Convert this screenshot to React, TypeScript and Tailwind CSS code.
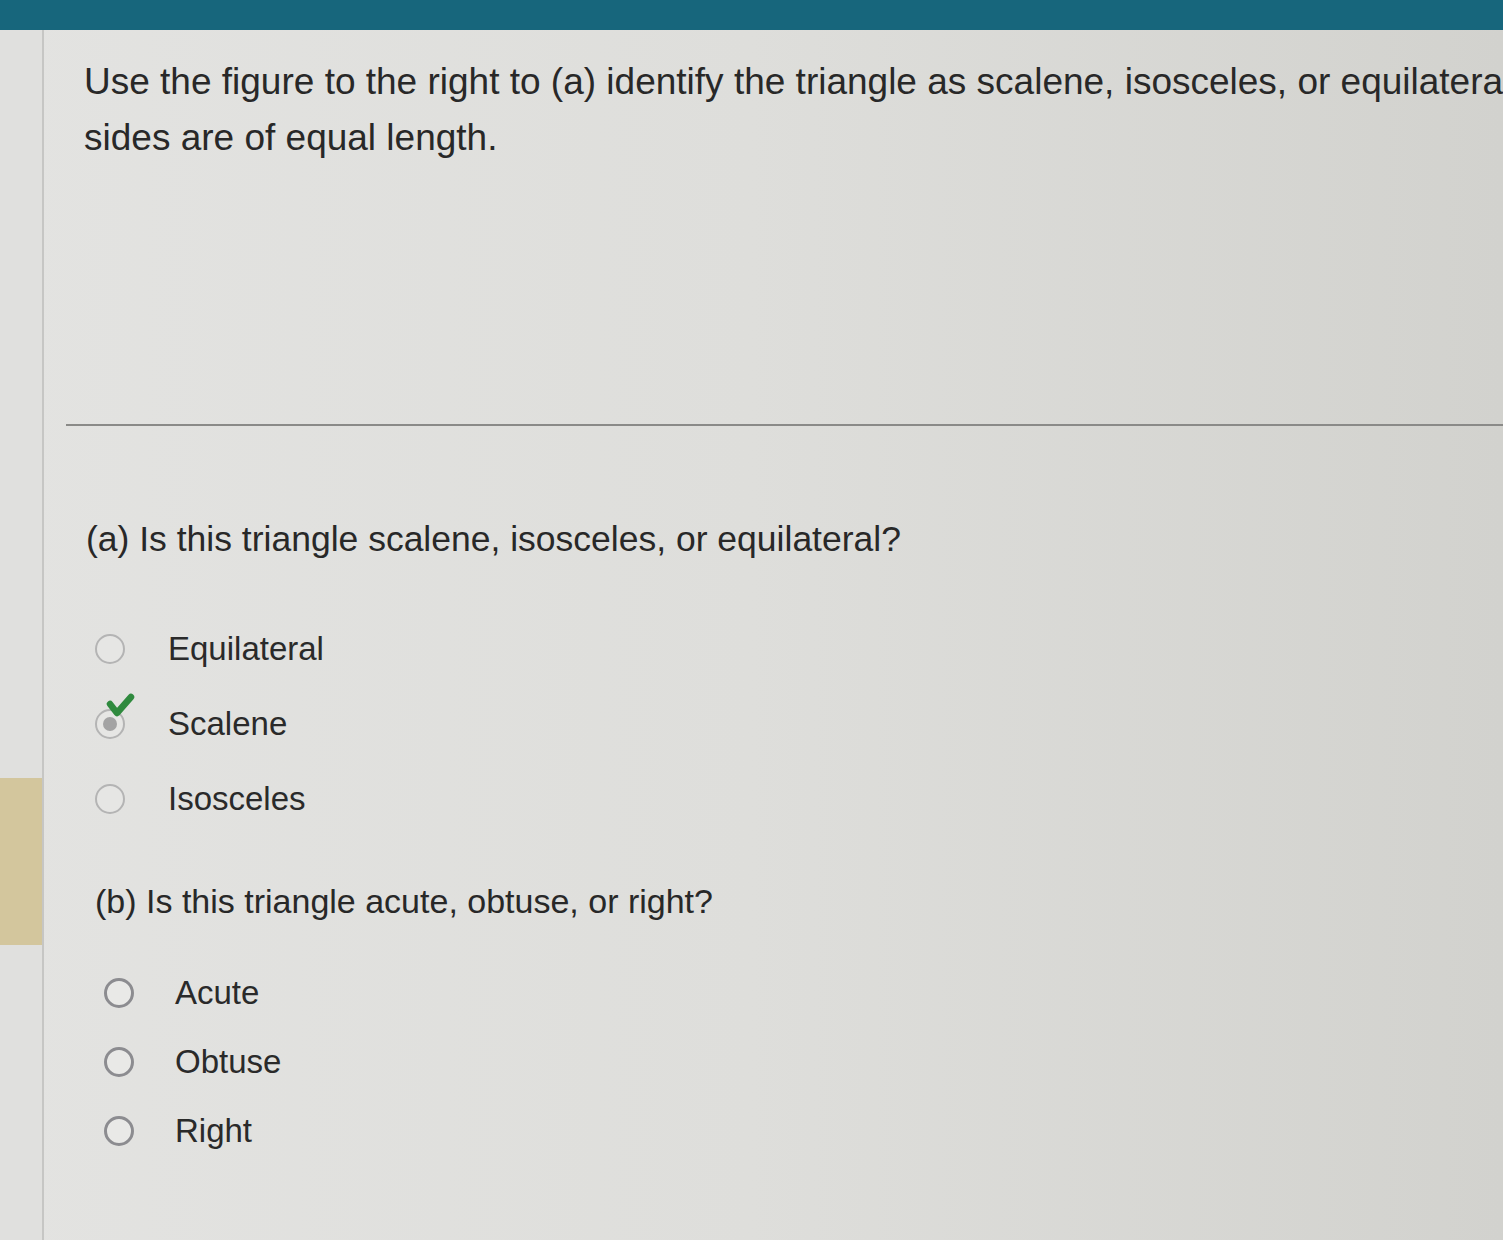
import React from 'react';

type Choice = { label: string; selected?: boolean };

const PART_A: Choice[] = [
  { label: 'Equilateral' },
  { label: 'Scalene', selected: true },
  { label: 'Isosceles' },
];

const PART_B: Choice[] = [{ label: 'Acute' }, { label: 'Obtuse' }, { label: 'Right' }];

function Radio({ selected, dark }: { selected?: boolean; dark?: boolean }) {
  return (
    <span className="relative flex h-[30px] w-[30px] shrink-0 items-center justify-center">
      <span
        className={
          dark
            ? 'h-[30px] w-[30px] rounded-full border-[3px] border-[#8c8c90] bg-[#e9e9e7]'
            : 'h-[30px] w-[30px] rounded-full border-[2.5px] border-[#b4b4b4] bg-[#e6e6e4]'
        }
      />
      {selected && (
        <>
          <span className="absolute h-[14px] w-[14px] rounded-full bg-[#a3a3a3]" />
          <svg
            className="absolute -right-[10px] -top-[16px] h-[26px] w-[30px]"
            viewBox="0 0 30 26"
            fill="none"
          >
            <path
              d="M5 11 L12 20 L26 4"
              stroke="#2f8a3e"
              strokeWidth="6.5"
              strokeLinecap="round"
              strokeLinejoin="round"
            />
          </svg>
        </>
      )}
    </span>
  );
}

function ChoiceList({ items, dark, rowClass, gapClass }: { items: Choice[]; dark?: boolean; rowClass: string; gapClass: string }) {
  return (
    <div className="flex flex-col">
      {items.map((c) => (
        <label key={c.label} className={`flex items-center ${rowClass} ${gapClass}`}>
          <Radio selected={c.selected} dark={dark} />
          <span className="text-[33px] leading-none text-[#2a2a2a]">{c.label}</span>
        </label>
      ))}
    </div>
  );
}

export default function App() {
  return (
    <div className="h-[1240px] w-[1503px] overflow-hidden bg-gradient-to-r from-[#e3e3e1] via-[#dededb] to-[#d2d2ce] font-['Liberation_Sans',Arial,sans-serif] text-[#282828]">
      <div className="h-[30px] bg-[#17667c]" />
      <div className="flex h-[1210px]">
        <aside className="flex w-[44px] shrink-0 flex-col border-r-2 border-[#c6c6c4] bg-[#e0e0de]">
          <div className="h-[748px]" />
          <div className="h-[167px] bg-[#d3c69d]" />
        </aside>

        <main className="min-w-0 flex-1 overflow-hidden pl-[22px]">
          <div className="whitespace-nowrap pl-[18px] pt-[24px] text-[37px] leading-[56px]">
            <p>
              Use the figure to the right to (a) identify the triangle as scalene, isosceles, or equilateral and (b) identify the triangle as acute, obtuse, or right. If possible, indicate which
            </p>
            <p>sides are of equal length.</p>
          </div>

          <hr className="mt-[258px] border-t-2 border-[#8a8a88]" />

          <section className="pl-[20px] pt-[91px]">
            <p className="text-[35.5px] leading-[44px]">(a) Is this triangle scalene, isosceles, or equilateral?</p>
            <div className="mt-[50px] pl-[9px]">
              <ChoiceList items={PART_A} rowClass="h-[75px]" gapClass="gap-[43px]" />
            </div>
          </section>

          <section className="pl-[29px] pt-[43px]">
            <p className="text-[34px] leading-[44px]">(b) Is this triangle acute, obtuse, or right?</p>
            <div className="mt-[35px] pl-[9px]">
              <ChoiceList items={PART_B} dark rowClass="h-[69px]" gapClass="gap-[41px]" />
            </div>
          </section>
        </main>
      </div>
    </div>
  );
}
